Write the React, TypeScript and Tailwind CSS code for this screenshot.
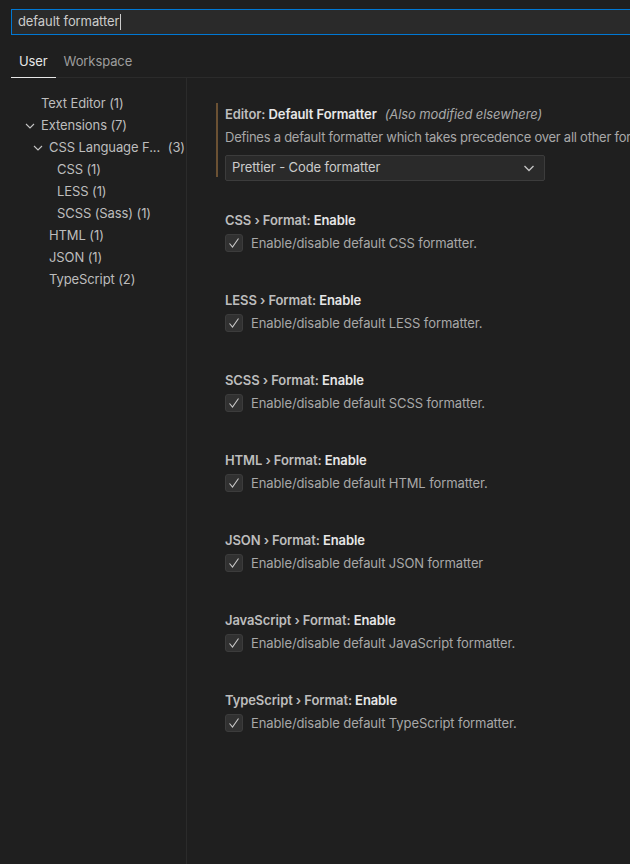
const font = { fontFamily: "Inter, 'Noto Sans', sans-serif" };

type Row = { label: string; count: string; depth: number; chevron?: boolean; extra?: boolean };

const tree: Row[] = [
  { label: "Text Editor", count: "(1)", depth: 0 },
  { label: "Extensions", count: "(7)", depth: 0, chevron: true },
  { label: "CSS Language F...", count: "(3)", depth: 1, chevron: true, extra: true },
  { label: "CSS", count: "(1)", depth: 2 },
  { label: "LESS", count: "(1)", depth: 2 },
  { label: "SCSS (Sass)", count: "(1)", depth: 2 },
  { label: "HTML", count: "(1)", depth: 1 },
  { label: "JSON", count: "(1)", depth: 1 },
  { label: "TypeScript", count: "(2)", depth: 1 },
];

const settings = [
  { cat: "CSS", desc: "Enable/disable default CSS formatter." },
  { cat: "LESS", desc: "Enable/disable default LESS formatter." },
  { cat: "SCSS", desc: "Enable/disable default SCSS formatter." },
  { cat: "HTML", desc: "Enable/disable default HTML formatter." },
  { cat: "JSON", desc: "Enable/disable default JSON formatter" },
  { cat: "JavaScript", desc: "Enable/disable default JavaScript formatter." },
  { cat: "TypeScript", desc: "Enable/disable default TypeScript formatter." },
];

const padByDepth = ["pl-[41px]", "pl-[49px]", "pl-[57px]"];

function Chevron() {
  return (
    <svg width="10" height="10" viewBox="0 0 10 10" fill="none" stroke="#c5c5c5" strokeWidth="1.1" aria-hidden="true">
      <polyline points="1 3 5 7 9 3" />
    </svg>
  );
}

function Checkbox() {
  return (
    <div className="flex h-[18px] w-[18px] shrink-0 items-center justify-center rounded-[3px] border border-[#3c3c3c] bg-[#313131]">
      <svg width="14" height="14" viewBox="0 0 14 14" fill="none" stroke="#c8c8c8" strokeWidth="1.1" aria-hidden="true">
        <polyline points="2.5 7.5 5.5 11 11.5 2.5" />
      </svg>
    </div>
  );
}

export default function App() {
  return (
    <div className="flex h-[864px] w-[630px] flex-col overflow-hidden bg-[#1f1f1f] text-[13px] tracking-[-0.1px]" style={font}>
      {/* search */}
      <div className="pl-[11px] pt-[9px]">
        <div className="flex h-[26px] items-center border border-r-0 border-[#0078d4] bg-[#2a2a2a] pl-[6px] text-[13px] text-[#cccccc]">
          default formatter
          <span className="ml-px h-[16px] w-px bg-[#cccccc]" />
        </div>
      </div>

      {/* tabs */}
      <div className="ml-[11px] mt-[11px] flex border-b border-[#2b2b2b]">
        <div className="-mb-px border-b border-[#e7e7e7] px-[8px] pb-[5px] pt-[6px] text-[#e7e7e7]">User</div>
        <div className="px-[8px] pb-[5px] pt-[6px] text-[#9d9d9d]">Workspace</div>
      </div>

      <div className="flex flex-1">
        {/* tree */}
        <div className="w-[187px] shrink-0 border-r border-[#2b2b2b] pt-[15px]">
          {tree.map((r) => (
            <div key={r.label} className={`relative flex h-[22px] items-center text-[#bdbdbd] ${padByDepth[r.depth]}`}>
              {r.chevron ? (
                <span className={`absolute top-[6px] ${r.depth === 0 ? "left-[25px]" : "left-[33px]"}`}>
                  <Chevron />
                </span>
              ) : null}
              {r.extra ? (
                <>
                  <span>{r.label}</span>
                  <span className="ml-auto pr-[1px]">{r.count}</span>
                </>
              ) : (
                <span>
                  {r.label} {r.count}
                </span>
              )}
            </div>
          ))}
        </div>

        {/* settings list */}
        <div className="min-w-0 flex-1 pl-[29px] pt-[25px]">
          <div className="relative flex flex-col pl-[9px] pt-[2px]">
            <span className="absolute left-0 top-0 h-[74px] w-[2px] bg-[#6b5133]" />
            <div className="whitespace-nowrap leading-[18px] text-[#bdbdbd]">
              <span className="font-semibold">Editor: </span>
              <span className="font-semibold text-[#e7e7e7]">Default Formatter</span>
              <span className="ml-[8px] italic text-[#a8a8a8]">(Also modified elsewhere)</span>
            </div>
            <div className="mt-[5px] whitespace-nowrap leading-[18px] tracking-[-0.25px] text-[#a8a8a8]">
              Defines a default formatter which takes precedence over all other formatter settings.
            </div>
            <div className="mt-[9px] flex h-[26px] w-[320px] items-center justify-between rounded-[2px] border border-[#3c3c3c] bg-[#2a2a2a] pl-[6px] pr-[9px] text-[#cccccc]">
              <span>Prettier - Code formatter</span>
              <svg width="12" height="12" viewBox="0 0 12 12" fill="none" stroke="#c5c5c5" strokeWidth="1.3" aria-hidden="true">
                <polyline points="1.5 4 6 8.5 10.5 4" />
              </svg>
            </div>
          </div>

          <div className="mt-[30px] flex flex-col gap-[39px] pl-[9px]">
            {settings.map((s) => (
              <div key={s.cat} className="flex flex-col">
                <div className="font-semibold leading-[18px] text-[#bdbdbd]">
                  {s.cat} › Format: <span className="text-[#e7e7e7]">Enable</span>
                </div>
                <div className="mt-[5px] flex items-center gap-[8px]">
                  <Checkbox />
                  <span className="leading-[18px] text-[#a8a8a8]">{s.desc}</span>
                </div>
              </div>
            ))}
          </div>
        </div>
      </div>
    </div>
  );
}
